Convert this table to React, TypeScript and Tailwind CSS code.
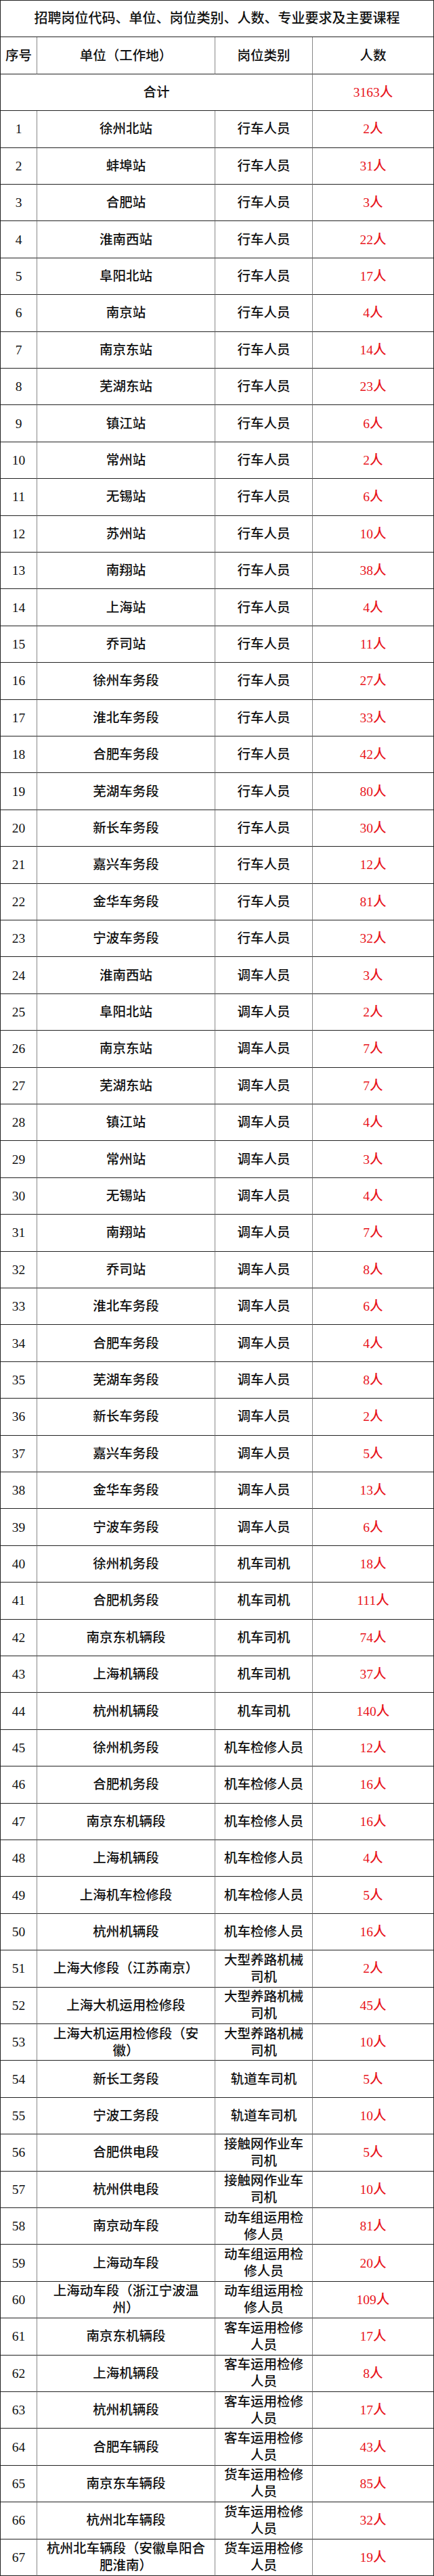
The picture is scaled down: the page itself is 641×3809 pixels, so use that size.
type Row = [string, string, number];

const rows: Row[] = [
  ["徐州北站", "行车人员", 2],
  ["蚌埠站", "行车人员", 31],
  ["合肥站", "行车人员", 3],
  ["淮南西站", "行车人员", 22],
  ["阜阳北站", "行车人员", 17],
  ["南京站", "行车人员", 4],
  ["南京东站", "行车人员", 14],
  ["芜湖东站", "行车人员", 23],
  ["镇江站", "行车人员", 6],
  ["常州站", "行车人员", 2],
  ["无锡站", "行车人员", 6],
  ["苏州站", "行车人员", 10],
  ["南翔站", "行车人员", 38],
  ["上海站", "行车人员", 4],
  ["乔司站", "行车人员", 11],
  ["徐州车务段", "行车人员", 27],
  ["淮北车务段", "行车人员", 33],
  ["合肥车务段", "行车人员", 42],
  ["芜湖车务段", "行车人员", 80],
  ["新长车务段", "行车人员", 30],
  ["嘉兴车务段", "行车人员", 12],
  ["金华车务段", "行车人员", 81],
  ["宁波车务段", "行车人员", 32],
  ["淮南西站", "调车人员", 3],
  ["阜阳北站", "调车人员", 2],
  ["南京东站", "调车人员", 7],
  ["芜湖东站", "调车人员", 7],
  ["镇江站", "调车人员", 4],
  ["常州站", "调车人员", 3],
  ["无锡站", "调车人员", 4],
  ["南翔站", "调车人员", 7],
  ["乔司站", "调车人员", 8],
  ["淮北车务段", "调车人员", 6],
  ["合肥车务段", "调车人员", 4],
  ["芜湖车务段", "调车人员", 8],
  ["新长车务段", "调车人员", 2],
  ["嘉兴车务段", "调车人员", 5],
  ["金华车务段", "调车人员", 13],
  ["宁波车务段", "调车人员", 6],
  ["徐州机务段", "机车司机", 18],
  ["合肥机务段", "机车司机", 111],
  ["南京东机辆段", "机车司机", 74],
  ["上海机辆段", "机车司机", 37],
  ["杭州机辆段", "机车司机", 140],
  ["徐州机务段", "机车检修人员", 12],
  ["合肥机务段", "机车检修人员", 16],
  ["南京东机辆段", "机车检修人员", 16],
  ["上海机辆段", "机车检修人员", 4],
  ["上海机车检修段", "机车检修人员", 5],
  ["杭州机辆段", "机车检修人员", 16],
  ["上海大修段（江苏南京）", "大型养路机械司机", 2],
  ["上海大机运用检修段", "大型养路机械司机", 45],
  ["上海大机运用检修段（安徽）", "大型养路机械司机", 10],
  ["新长工务段", "轨道车司机", 5],
  ["宁波工务段", "轨道车司机", 10],
  ["合肥供电段", "接触网作业车司机", 5],
  ["杭州供电段", "接触网作业车司机", 10],
  ["南京动车段", "动车组运用检修人员", 81],
  ["上海动车段", "动车组运用检修人员", 20],
  ["上海动车段（浙江宁波温州）", "动车组运用检修人员", 109],
  ["南京东机辆段", "客车运用检修人员", 17],
  ["上海机辆段", "客车运用检修人员", 8],
  ["杭州机辆段", "客车运用检修人员", 17],
  ["合肥车辆段", "客车运用检修人员", 43],
  ["南京东车辆段", "货车运用检修人员", 85],
  ["杭州北车辆段", "货车运用检修人员", 32],
  ["杭州北车辆段（安徽阜阳合肥淮南）", "货车运用检修人员", 19],
];

// shared cell look; padding is set per column
const cell = "flex items-center justify-center text-center border-b border-[#222] leading-[25px]";
const mid = "border-r border-r-[#888]";
const last = "border-r border-r-[#222]";
const red = "text-[#e8141c]";

export default function App() {
  return (
    <div
      className="w-[641px] h-[3809px] bg-white text-[#111] text-[19.5px] font-medium grid grid-cols-[54px_263px_144px_1fr] grid-rows-[repeat(70,minmax(0,1fr))] border-t border-l border-[#222]"
      style={{ fontFamily: '"Liberation Serif", "Noto Sans CJK SC", serif' }}
    >
      <div className={`${cell} ${last} col-span-4 text-[20px]`}>
        招聘岗位代码、单位、岗位类别、人数、专业要求及主要课程
      </div>

      <div className={`${cell} ${mid}`}>序号</div>
      <div className={`${cell} ${mid} px-3`}>单位（工作地）</div>
      <div className={`${cell} ${mid} px-2`}>岗位类别</div>
      <div className={`${cell} ${last}`}>人数</div>

      <div className={`${cell} ${mid} col-span-3`}>合计</div>
      <div className={`${cell} ${last} ${red}`}>3163人</div>

      {rows.map(([unit, kind, count], i) => (
        <div key={i} className="contents">
          <div className={`${cell} ${mid}`}>{i + 1}</div>
          <div className={`${cell} ${mid} px-3`}>{unit}</div>
          <div className={`${cell} ${mid} px-2`}>{kind}</div>
          <div className={`${cell} ${last} ${red}`}>{count}人</div>
        </div>
      ))}
    </div>
  );
}
